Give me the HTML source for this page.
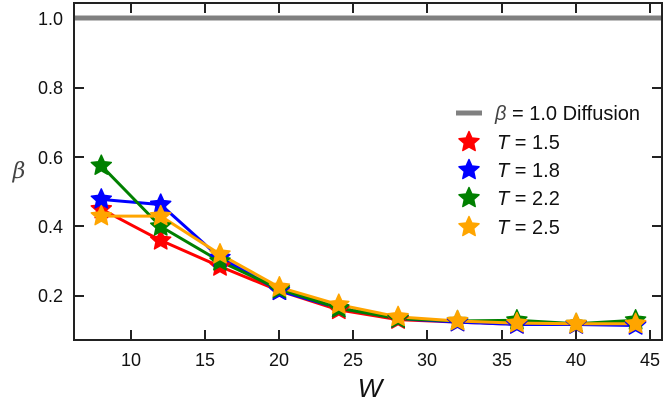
<!DOCTYPE html>
<html><head><style>body{margin:0;background:#fff}svg{display:block}</style></head><body>
<svg width="664" height="403" viewBox="0 0 664 403" xmlns="http://www.w3.org/2000/svg" font-family="Liberation Sans, sans-serif">
<defs><path id="s" d="M0,-10.5 L2.9,-4 L10,-3.2 L4.7,1.5 L6.2,8.5 L0,5 L-6.2,8.5 L-4.7,1.5 L-10,-3.2 L-2.9,-4Z" stroke-linejoin="round"/></defs>
<line x1="74" y1="18" x2="662" y2="18" stroke="#808080" stroke-width="5"/>
<g stroke="#222" stroke-width="2" fill="none">
<rect x="74" y="3" width="588" height="337"/>
<path d="M74,88h10M74,157h10M74,226h10M74,296h10M662,88h-10M662,157h-10M662,226h-10M662,296h-10M131,340v-10M205,340v-10M279,340v-10M353,340v-10M427,340v-10M502,340v-10M576,340v-10M650,340v-10M131,3v10M205,3v10M279,3v10M353,3v10M427,3v10M502,3v10M576,3v10M650,3v10"/>
</g>
<g font-size="18" fill="#111" text-anchor="end">
<text x="63" y="25">1.0</text><text x="63" y="94">0.8</text><text x="63" y="164">0.6</text><text x="63" y="233">0.4</text><text x="63" y="302">0.2</text>
</g>
<g font-size="18" fill="#111" text-anchor="middle">
<text x="131" y="366">10</text><text x="205" y="366">15</text><text x="279" y="366">20</text><text x="353" y="366">25</text><text x="427" y="366">30</text><text x="502" y="366">35</text><text x="576" y="366">40</text><text x="650" y="366">45</text>
</g>
<text x="370" y="397" font-size="26" font-style="italic" text-anchor="middle" fill="#111">W</text>
<text x="19" y="178" font-size="22" font-style="italic" text-anchor="middle" fill="#444" font-family="DejaVu Serif, serif">β</text>
<g fill="none" stroke-width="3" stroke-linejoin="round">
<polyline stroke="red" points="101.3,209.1 160.7,240.4 220,266.5 279.4,290.8 338.8,309.9 398.1,319.6 457.5,322.1 516.9,324.5 576.2,324.5 635.6,324.5"/>
<polyline stroke="blue" points="101.3,199.4 160.7,204.6 220,257.8 279.4,290.8 338.8,308.2 398.1,318.6 457.5,322.1 516.9,324.5 576.2,324.5 635.6,325.5"/>
<polyline stroke="green" points="101.3,165.7 160.7,226.5 220,261.3 279.4,289.1 338.8,308.2 398.1,318.6 457.5,321 516.9,320.3 576.2,323.8 635.6,320.3"/>
<polyline stroke="orange" points="101.3,216.1 160.7,216.1 220,254.3 279.4,287.3 338.8,304.7 398.1,316.9 457.5,321 516.9,323.1 576.2,323.8 635.6,323.8"/>
</g>
<g fill="red" stroke="red" stroke-width="1.5"><use href="#s" x="101.3" y="209.1"/><use href="#s" x="160.7" y="240.4"/><use href="#s" x="220" y="266.5"/><use href="#s" x="279.4" y="290.8"/><use href="#s" x="338.8" y="309.9"/><use href="#s" x="398.1" y="319.6"/><use href="#s" x="457.5" y="322.1"/><use href="#s" x="516.9" y="324.5"/><use href="#s" x="576.2" y="324.5"/><use href="#s" x="635.6" y="324.5"/></g>
<g fill="blue" stroke="blue" stroke-width="1.5"><use href="#s" x="101.3" y="199.4"/><use href="#s" x="160.7" y="204.6"/><use href="#s" x="220" y="257.8"/><use href="#s" x="279.4" y="290.8"/><use href="#s" x="338.8" y="308.2"/><use href="#s" x="398.1" y="318.6"/><use href="#s" x="457.5" y="322.1"/><use href="#s" x="516.9" y="324.5"/><use href="#s" x="576.2" y="324.5"/><use href="#s" x="635.6" y="325.5"/></g>
<g fill="green" stroke="green" stroke-width="1.5"><use href="#s" x="101.3" y="165.7"/><use href="#s" x="160.7" y="226.5"/><use href="#s" x="220" y="261.3"/><use href="#s" x="279.4" y="289.1"/><use href="#s" x="338.8" y="308.2"/><use href="#s" x="398.1" y="318.6"/><use href="#s" x="457.5" y="321"/><use href="#s" x="516.9" y="320.3"/><use href="#s" x="576.2" y="323.8"/><use href="#s" x="635.6" y="320.3"/></g>
<g fill="orange" stroke="orange" stroke-width="1.5"><use href="#s" x="101.3" y="216.1"/><use href="#s" x="160.7" y="216.1"/><use href="#s" x="220" y="254.3"/><use href="#s" x="279.4" y="287.3"/><use href="#s" x="338.8" y="304.7"/><use href="#s" x="398.1" y="316.9"/><use href="#s" x="457.5" y="321"/><use href="#s" x="516.9" y="323.1"/><use href="#s" x="576.2" y="323.8"/><use href="#s" x="635.6" y="323.8"/></g>
<line x1="456" y1="113" x2="482" y2="113" stroke="#808080" stroke-width="5"/>
<g stroke-width="1.5"><use href="#s" x="469" y="142" fill="red" stroke="red"/><use href="#s" x="469" y="170" fill="blue" stroke="blue"/><use href="#s" x="469" y="198" fill="green" stroke="green"/><use href="#s" x="469" y="227" fill="orange" stroke="orange"/></g>
<g font-size="20" fill="#111">
<text x="495" y="120"><tspan font-style="italic" fill="#444">β</tspan> = 1.0 Diffusion</text>
<text x="497" y="149"><tspan font-style="italic">T</tspan> = 1.5</text>
<text x="497" y="177"><tspan font-style="italic">T</tspan> = 1.8</text>
<text x="497" y="205"><tspan font-style="italic">T</tspan> = 2.2</text>
<text x="497" y="234"><tspan font-style="italic">T</tspan> = 2.5</text>
</g>
</svg>
</body></html>
